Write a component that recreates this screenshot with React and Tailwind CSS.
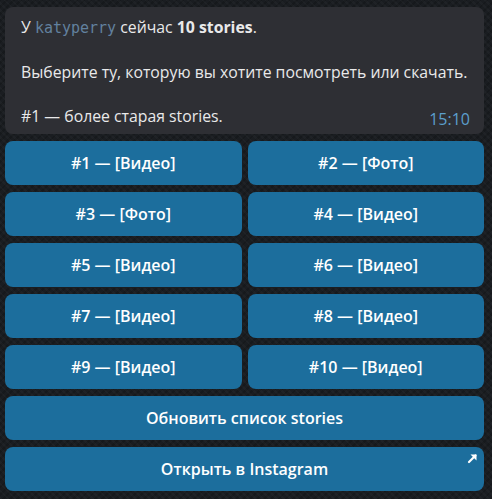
import React from "react";

const btn = "flex items-center justify-center h-[44px] rounded-[8px] bg-[#1c6e9d] text-white text-[16px] font-semibold";

function ArrowIcon() {
  return (
    <svg width="11" height="11" viewBox="0 0 11 11" className="absolute top-[6px] right-[6px]">
      <path d="M2 9 L8.5 2.5" stroke="white" strokeWidth="2.2" strokeLinecap="round" />
      <path d="M3.5 1.5 H9.5 V7.5 Z" fill="white" />
    </svg>
  );
}

export default function App() {
  const items = [
    "#1 — [Видео]", "#2 — [Фото]",
    "#3 — [Фото]", "#4 — [Видео]",
    "#5 — [Видео]", "#6 — [Видео]",
    "#7 — [Видео]", "#8 — [Видео]",
    "#9 — [Видео]", "#10 — [Видео]",
  ];
  return (
    <div
      className="w-[492px] h-[499px] overflow-hidden bg-[#1a1d21] pt-[7px] pl-[5px] pr-[8px]"
      style={{
        fontFamily: '"Open Sans", "Noto Sans", sans-serif',
        backgroundImage:
          "repeating-linear-gradient(45deg, rgba(255,255,255,0.025) 0 2px, transparent 2px 5px), repeating-linear-gradient(-45deg, rgba(0,0,0,0.15) 0 2px, transparent 2px 5px)",
      }}
    >
      <div className="relative rounded-[8px] bg-[#2e2f34] h-[127px] pl-[16px] pr-[8px] pt-[9px] text-[15.8px] leading-[22px] text-[#e9e9ea] whitespace-nowrap">
        <p>
          У{" "}
          <span className="text-[#62819f] text-[15px]" style={{ fontFamily: '"DejaVu Sans Mono", monospace' }}>katyperry</span>{" "}
          сейчас <span className="font-bold">10 stories</span>.
        </p>
        <p className="mt-[22px]">Выберите ту, которую вы хотите посмотреть или скачать.</p>
        <p className="mt-[22px]">#1 — более старая stories.</p>
        <span className="absolute right-[14px] bottom-[4px] text-[16px] text-[#5c9fcc]">15:10</span>
      </div>
      <div className="mt-[7px] grid grid-cols-2 gap-x-[6px] gap-y-[7px]">
        {items.map((t) => (
          <div key={t} className={btn}>{t}</div>
        ))}
        <div className={`${btn} col-span-2`}>Обновить список stories</div>
        <div className={`${btn} col-span-2 relative`}>
          Открыть в Instagram
          <ArrowIcon />
        </div>
      </div>
    </div>
  );
}
